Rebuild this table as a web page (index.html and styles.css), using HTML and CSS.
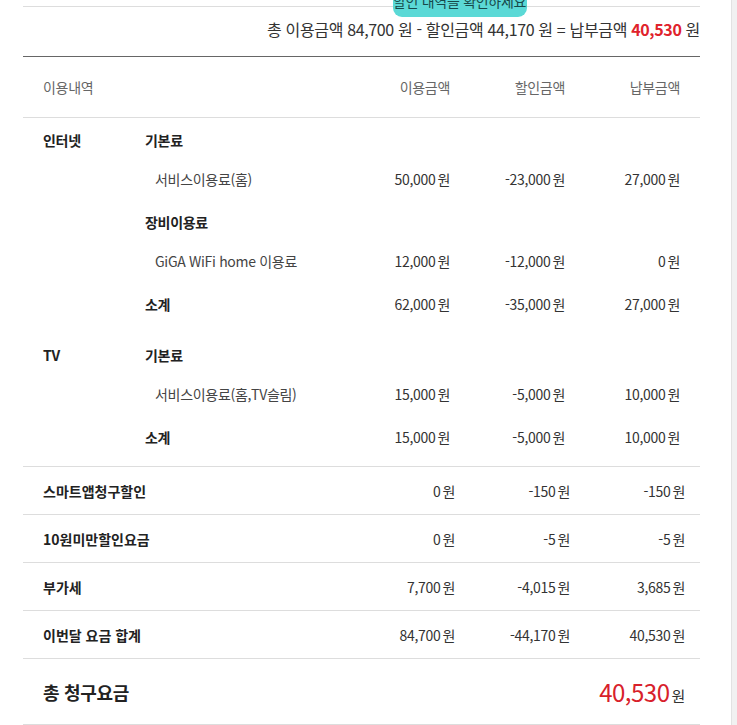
FILE: index.html
```html
<!DOCTYPE html>
<html lang="ko">
<head>
    <meta charset="UTF-8">
    <meta name="viewport" content="width=device-width, initial-scale=1.0">
    <title>요금 상세내역</title>
    <link rel="stylesheet" href="styles.css">
</head>
<body>
<div class="wrap">
    <div class="tip">할인 내역을 확인하세요.</div>
    <p class="summary">
        총 이용금액 84,700 원 - 할인금액 44,170 원 = 납부금액 <strong class="red">40,530</strong> 원
    </p>

    <div class="bill">
        <div class="row head">
            <span class="svc">이용내역</span>
            <span class="name"></span>
            <span class="amt">이용금액</span>
            <span class="amt">할인금액</span>
            <span class="amt">납부금액</span>
        </div>

        <div class="usage">
            <div class="group">
                <div class="row line cat">
                    <span class="svc">인터넷</span>
                    <span class="name">기본료</span>
                </div>
                <div class="row line item">
                    <span class="svc"></span>
                    <span class="name">서비스이용료(홈)</span>
                    <span class="amt">50,000<i>원</i></span>
                    <span class="amt">-23,000<i>원</i></span>
                    <span class="amt">27,000<i>원</i></span>
                </div>
                <div class="row line cat">
                    <span class="svc"></span>
                    <span class="name">장비이용료</span>
                </div>
                <div class="row line item">
                    <span class="svc"></span>
                    <span class="name">GiGA WiFi home 이용료</span>
                    <span class="amt">12,000<i>원</i></span>
                    <span class="amt">-12,000<i>원</i></span>
                    <span class="amt">0<i>원</i></span>
                </div>
                <div class="row line cat">
                    <span class="svc"></span>
                    <span class="name">소계</span>
                    <span class="amt">62,000<i>원</i></span>
                    <span class="amt">-35,000<i>원</i></span>
                    <span class="amt">27,000<i>원</i></span>
                </div>
            </div>

            <div class="group">
                <div class="row line cat">
                    <span class="svc">TV</span>
                    <span class="name">기본료</span>
                </div>
                <div class="row line item">
                    <span class="svc"></span>
                    <span class="name">서비스이용료(홈,TV슬림)</span>
                    <span class="amt">15,000<i>원</i></span>
                    <span class="amt">-5,000<i>원</i></span>
                    <span class="amt">10,000<i>원</i></span>
                </div>
                <div class="row line cat">
                    <span class="svc"></span>
                    <span class="name">소계</span>
                    <span class="amt">15,000<i>원</i></span>
                    <span class="amt">-5,000<i>원</i></span>
                    <span class="amt">10,000<i>원</i></span>
                </div>
            </div>
        </div>

        <div class="row extra">
            <span class="label">스마트앱청구할인</span>
            <span class="amt">0<i>원</i></span>
            <span class="amt">-150<i>원</i></span>
            <span class="amt">-150<i>원</i></span>
        </div>
        <div class="row extra">
            <span class="label">10원미만할인요금</span>
            <span class="amt">0<i>원</i></span>
            <span class="amt">-5<i>원</i></span>
            <span class="amt">-5<i>원</i></span>
        </div>
        <div class="row extra">
            <span class="label">부가세</span>
            <span class="amt">7,700<i>원</i></span>
            <span class="amt">-4,015<i>원</i></span>
            <span class="amt">3,685<i>원</i></span>
        </div>
        <div class="row extra">
            <span class="label">이번달 요금 합계</span>
            <span class="amt">84,700<i>원</i></span>
            <span class="amt">-44,170<i>원</i></span>
            <span class="amt">40,530<i>원</i></span>
        </div>

        <div class="row total">
            <span class="label">총 청구요금</span>
            <span class="sum"><b>40,530</b><i>원</i></span>
        </div>
    </div>
</div>
<div class="scrollbar"></div>
</body>
</html>
```

FILE: styles.css
```css
/* bill detail */
body {
    margin: 0;
    background: #fff;
    color: #333;
    font-family: "Noto Sans CJK KR", "Noto Sans", sans-serif;
    font-size: 14px;
    letter-spacing: -0.3px;
}
.wrap {
    position: relative;
    width: 677px;
    margin: 6px 0 0 23px;
    border-top: 1px solid #ddd;
}
.tip {
    position: absolute;
    top: -7px;
    left: 370px;
    width: 134px;
    height: 17px;
    overflow: hidden;
    background: #5bd9d6;
    border-radius: 0 0 9px 9px;
    color: #17494a;
    font-size: 14px;
    line-height: 2px;
    white-space: nowrap;
    text-align: center;
}
.summary {
    margin: 10px 0 0;
    padding-bottom: 15px;
    line-height: 24px;
    font-size: 16px;
    letter-spacing: -0.35px;
    text-align: right;
    color: #333;
}
.red {
    color: #e0222b;
    font-weight: bold;
}

.bill {
    border-top: 1px solid #666;
}
.row {
    display: grid;
    grid-template-columns: 102px 1fr 115px 115px 115px;
    align-items: center;
    padding: 0 20px;
}
.amt {
    text-align: right;
}
.amt i, .sum i {
    font-style: normal;
    margin-left: 2px;
}
.head {
    height: 60px;
    border-bottom: 1px solid #ddd;
    color: #666;
}

.usage {
    border-bottom: 1px solid #ddd;
}
.group {
    padding: 2px 0 10px;
}
.line {
    height: 39px;
}
.cat {
    font-weight: bold;
    color: #222;
}
.cat + .item + .cat {
    margin-top: 4px;
}
.cat .amt {
    font-weight: normal;
    color: #333;
}
.item .name {
    padding-left: 10px;
    color: #444;
}

.extra {
    grid-template-columns: 1fr 115px 115px 115px;
    padding: 0 15px 0 20px;
    height: 47px;
    border-bottom: 1px solid #ddd;
}
.label {
    font-weight: bold;
    color: #222;
    letter-spacing: 0;
}
.total {
    grid-template-columns: 1fr auto;
    padding: 0 15px 0 20px;
    height: 65px;
    border-bottom: 1px solid #ddd;
}
.total .label {
    font-size: 18px;
    letter-spacing: -0.3px;
}
.sum b {
    font-weight: normal;
    font-size: 24px;
    color: #d8212a;
    letter-spacing: -0.5px;
}
.sum i {
    font-size: 15px;
    color: #333;
}

.scrollbar {
    position: fixed;
    top: 0;
    right: 0;
    width: 5px;
    height: 100%;
    background: #f1f1f1;
    border-left: 1px solid #e2e2e2;
}
```
